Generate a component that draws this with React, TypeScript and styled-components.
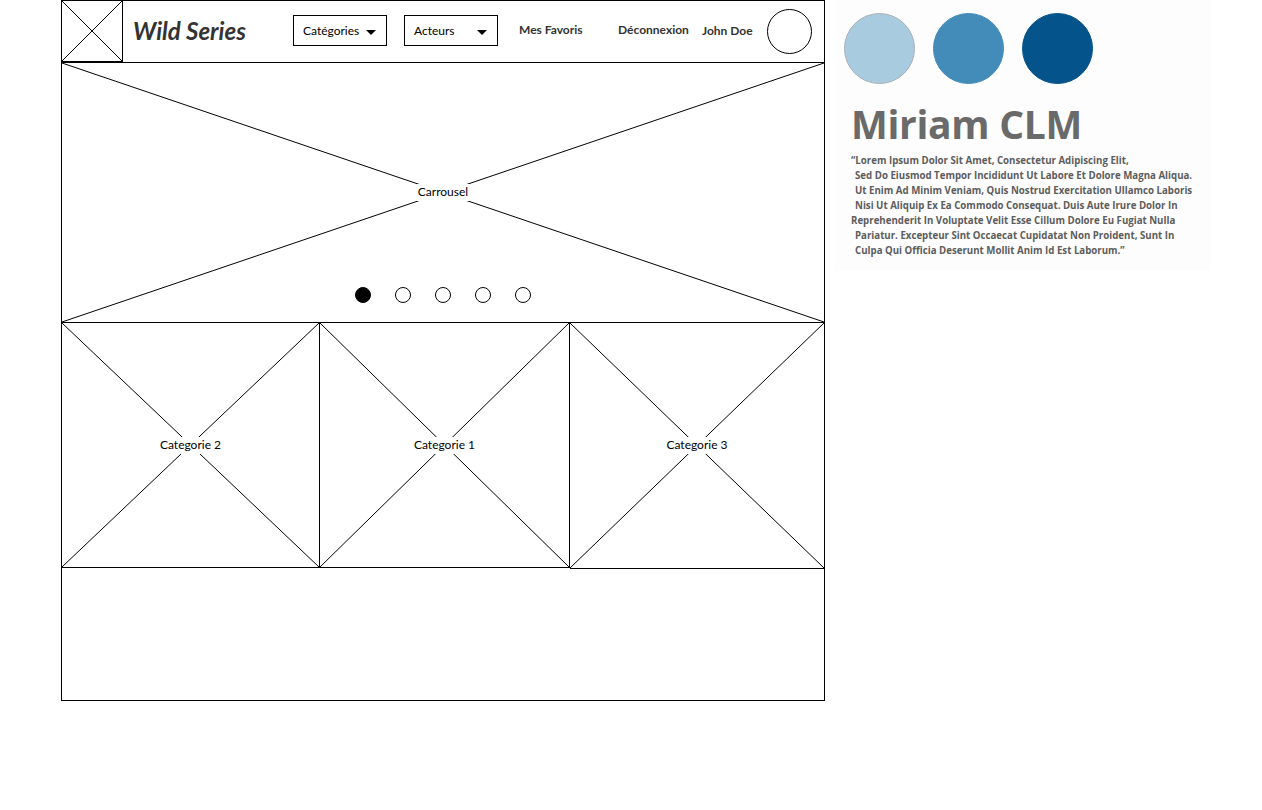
import React from "react";
import styled, { createGlobalStyle } from "styled-components";

const Global = createGlobalStyle`
  html, body { margin: 0; padding: 0; background: #ffffff; }
  body { font-family: "Lato", "Liberation Sans", sans-serif; color: #000; }
`;

const Page = styled.div`
  display: flex;
  align-items: flex-start;
  padding-left: 61px;
`;

const Frame = styled.div`
  box-sizing: border-box;
  width: 764px;
  height: 701px;
  border: 1px solid #000;
  display: flex;
  flex-direction: column;
`;

const Header = styled.header`
  box-sizing: border-box;
  height: 62px;
  padding-bottom: 2px;
  border-bottom: 1px solid #000;
  display: flex;
  align-items: center;
`;

const Cross = () => (
  <CrossSvg viewBox="0 0 100 100" preserveAspectRatio="none">
    <line x1="0" y1="0" x2="100" y2="100" stroke="#000" strokeWidth="1" vectorEffect="non-scaling-stroke" />
    <line x1="100" y1="0" x2="0" y2="100" stroke="#000" strokeWidth="1" vectorEffect="non-scaling-stroke" />
  </CrossSvg>
);

const CrossSvg = styled.svg`
  position: absolute;
  inset: 0;
  width: 100%;
  height: 100%;
`;

const Logo = styled.div`
  position: relative;
  box-sizing: border-box;
  width: 61px;
  height: 61px;
  align-self: flex-start;
  border-right: 1px solid #000;
  border-bottom: 1px solid #000;
  flex: none;
`;

const Title = styled.h1`
  box-sizing: border-box;
  width: 170px;
  margin: 0;
  padding-left: 10px;
  font-family: "Lato", sans-serif;
  font-style: italic;
  font-weight: 700;
  font-size: 24px;
  color: #333;
  flex: none;
`;

const Dropdown = styled.div<{ $gap: number }>`
  box-sizing: border-box;
  width: 94px;
  height: 31px;
  margin-right: ${(p) => p.$gap}px;
  border: 1px solid #000;
  display: flex;
  align-items: center;
  justify-content: space-between;
  padding: 0 10px 0 9px;
  font-size: 12px;
  color: #000;
  flex: none;
`;

const Caret = styled.span`
  width: 0;
  height: 0;
  margin-top: 4px;
  border-left: 5px solid transparent;
  border-right: 5px solid transparent;
  border-top: 5px solid #000;
`;

const NavLink = styled.span<{ $w: number; $dy?: number }>`
  width: ${(p) => p.$w}px;
  flex: none;
  font-size: 12px;
  font-weight: 700;
  color: #333;
  margin-top: ${(p) => p.$dy ?? 0}px;
  white-space: nowrap;
`;

const Avatar = styled.div`
  box-sizing: border-box;
  width: 45px;
  height: 45px;
  margin-top: 2px;
  border: 1px solid #000;
  border-radius: 50%;
  flex: none;
`;

const Placeholder = styled.div<{ $h: number; $right?: boolean }>`
  position: relative;
  box-sizing: border-box;
  height: ${(p) => p.$h}px;
  border-bottom: 1px solid #000;
  border-right: ${(p) => (p.$right ? "1px solid #000" : "none")};
  display: flex;
  align-items: center;
  justify-content: center;
`;

const Label = styled.span`
  position: relative;
  background: #fff;
  padding: 0 2px 2px;
  font-size: 12px;
  color: #000;
`;

const Dots = styled.div`
  position: absolute;
  left: 0;
  right: 0;
  bottom: 19px;
  display: flex;
  justify-content: center;
  gap: 24px;
`;

const Dot = styled.span<{ $on?: boolean }>`
  box-sizing: border-box;
  width: 16px;
  height: 16px;
  border-radius: 50%;
  border: 1px solid #000;
  background: ${(p) => (p.$on ? "#000" : "#fff")};
`;

const CategoryRow = styled.div`
  display: grid;
  grid-template-columns: 258px 250px 254px;
`;

const Board = styled.aside`
  box-sizing: border-box;
  width: 376px;
  height: 271px;
  margin-left: 10px;
  background: #fdfdfd;
  padding: 13px 0 0 9px;
  display: flex;
  flex-direction: column;
`;

const Swatches = styled.div`
  display: flex;
  gap: 18px;
`;

const Swatch = styled.span<{ $c: string; $b?: string }>`
  box-sizing: border-box;
  width: 71px;
  height: 71px;
  border-radius: 50%;
  background: ${(p) => p.$c};
  border: 1px solid ${(p) => p.$b ?? p.$c};
`;

const Name = styled.div`
  margin: 18px 0 0 7px;
  font-family: "Open Sans", sans-serif;
  font-weight: 700;
  font-size: 39px;
  line-height: 44px;
  color: #6a6a6a;
  letter-spacing: -0.3px;
`;

const Quote = styled.div`
  margin-top: 7px;
  font-family: "Open Sans", sans-serif;
  font-weight: 700;
  font-size: 9.7px;
  line-height: 15px;
  color: #5c5c5c;
  white-space: nowrap;
`;

const QLine = styled.div<{ $indent: number }>`
  padding-left: ${(p) => p.$indent}px;
`;

const lines: [number, string][] = [
  [7, "“Lorem Ipsum Dolor Sit Amet, Consectetur Adipiscing Elit,"],
  [11, "Sed Do Eiusmod Tempor Incididunt Ut Labore Et Dolore Magna Aliqua."],
  [11, "Ut Enim Ad Minim Veniam, Quis Nostrud Exercitation Ullamco Laboris"],
  [11, "Nisi Ut Aliquip Ex Ea Commodo Consequat. Duis Aute Irure Dolor In"],
  [7, "Reprehenderit In Voluptate Velit Esse Cillum Dolore Eu Fugiat Nulla"],
  [11, "Pariatur. Excepteur Sint Occaecat Cupidatat Non Proident, Sunt In"],
  [11, "Culpa Qui Officia Deserunt Mollit Anim Id Est Laborum.”"],
];

export default function App() {
  return (
    <>
      <Global />
      <Page>
        <Frame>
          <Header>
            <Logo>
              <Cross />
            </Logo>
            <Title>Wild Series</Title>
            <Dropdown $gap={17}>
              Catégories <Caret />
            </Dropdown>
            <Dropdown $gap={21}>
              Acteurs <Caret />
            </Dropdown>
            <NavLink $w={99} $dy={-3}>Mes Favoris</NavLink>
            <NavLink $w={84} $dy={-3}>Déconnexion</NavLink>
            <NavLink $w={65}>John Doe</NavLink>
            <Avatar />
          </Header>
          <Placeholder $h={260}>
            <Cross />
            <Label>Carrousel</Label>
            <Dots>
              <Dot $on />
              <Dot />
              <Dot />
              <Dot />
              <Dot />
            </Dots>
          </Placeholder>
          <CategoryRow>
            <Placeholder $h={245} $right>
              <Cross />
              <Label>Categorie 2</Label>
            </Placeholder>
            <Placeholder $h={245} $right>
              <Cross />
              <Label>Categorie 1</Label>
            </Placeholder>
            <Placeholder $h={246}>
              <Cross />
              <Label>Categorie 3</Label>
            </Placeholder>
          </CategoryRow>
        </Frame>
        <Board>
          <Swatches>
            <Swatch $c="#a9cbdf" $b="#a7b0b6" />
            <Swatch $c="#438bb8" />
            <Swatch $c="#04538a" />
          </Swatches>
          <Name>Miriam CLM</Name>
          <Quote>
            {lines.map(([i, t]) => (
              <QLine key={t} $indent={i}>{t}</QLine>
            ))}
          </Quote>
        </Board>
      </Page>
    </>
  );
}
